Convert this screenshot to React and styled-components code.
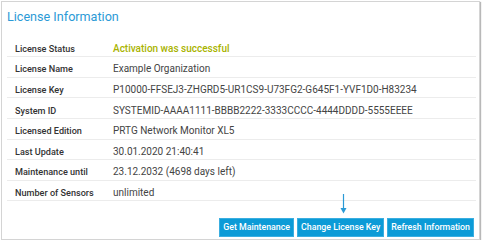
import React from "react";
import styled, { createGlobalStyle } from "styled-components";

const Global = createGlobalStyle`
  html, body { margin: 0; padding: 0; background: #fff; }
  body { font-family: Roboto, "Liberation Sans", Arial, sans-serif; }
  * { box-sizing: border-box; }
`;

const Panel = styled.div`
  position: relative;
  margin: 1px 0 0 1px;
  width: 479px;
  height: 239px;
  border: 1px solid #d4d4d4;
  box-shadow: 1px 1px 1px rgba(0, 0, 0, 0.28);
  padding: 7px 3px 0 5px;
  display: flex;
  flex-direction: column;
`;

const Title = styled.h2`
  margin: 0;
  font-size: 12.6px;
  line-height: 16px;
  font-weight: 400;
  color: #2b9ad6;
`;

const Table = styled.div`
  margin-top: 11.7px;
  display: flex;
  flex-direction: column;
`;

const Row = styled.div`
  display: grid;
  grid-template-columns: 106px 1fr;
  height: 20.6px;
  align-items: end;
  padding-bottom: 1.4px;
  border-bottom: 1px solid #ececec;
  line-height: 12px;
`;

const Label = styled.div`
  padding-left: 8px;
  color: #333;
  font-size: 9.1px;
  font-weight: 500;
  white-space: nowrap;
`;

const Value = styled.div`
  color: ${(p) => (p.$ok ? "#a9b300" : "#444")};
  font-size: 10px;
  font-weight: ${(p) => (p.$ok ? 500 : 400)};
  white-space: nowrap;
`;

const Actions = styled.div`
  display: flex;
  justify-content: flex-end;
  gap: 3px;
  margin-top: 17px;
  padding-right: 2px;
`;

const Button = styled.button`
  height: 19px;
  padding: 0 3px;
  border: 1px solid #3aaee0;
  background: #0c9bd7;
  color: #fff;
  font-family: Roboto, "Liberation Sans", Arial, sans-serif;
  font-size: 8.8px;
  font-weight: 500;
  line-height: 17px;
  cursor: pointer;
`;

const Arrow = styled.svg`
  position: absolute;
  left: 337px;
  top: 192px;
`;

const rows = [
  ["License Status", "Activation was successful", true],
  ["License Name", "Example Organization"],
  ["License Key", "P10000-FFSEJ3-ZHGRD5-UR1CS9-U73FG2-G645F1-YVF1D0-H83234"],
  ["System ID", "SYSTEMID-AAAA1111-BBBB2222-3333CCCC-4444DDDD-5555EEEE"],
  ["Licensed Edition", "PRTG Network Monitor XL5"],
  ["Last Update", "30.01.2020 21:40:41"],
  ["Maintenance until", "23.12.2032 (4698 days left)"],
  ["Number of Sensors", "unlimited"],
];

export default function App() {
  return (
    <>
      <Global />
      <Panel>
        <Title>License Information</Title>
        <Table>
          {rows.map(([l, v, ok]) => (
            <Row key={l}>
              <Label>{l}</Label>
              <Value $ok={ok}>{v}</Value>
            </Row>
          ))}
        </Table>
        <Actions>
          <Button>Get Maintenance</Button>
          <Button>Change License Key</Button>
          <Button>Refresh Information</Button>
        </Actions>
        <Arrow width="9" height="20" viewBox="0 0 9 20">
          <line x1="4.5" y1="0" x2="4.5" y2="15" stroke="#2a9ad6" strokeWidth="1.2" />
          <polygon points="1.5,14 7.5,14 4.5,19.5" fill="#2a9ad6" />
        </Arrow>
      </Panel>
    </>
  );
}
